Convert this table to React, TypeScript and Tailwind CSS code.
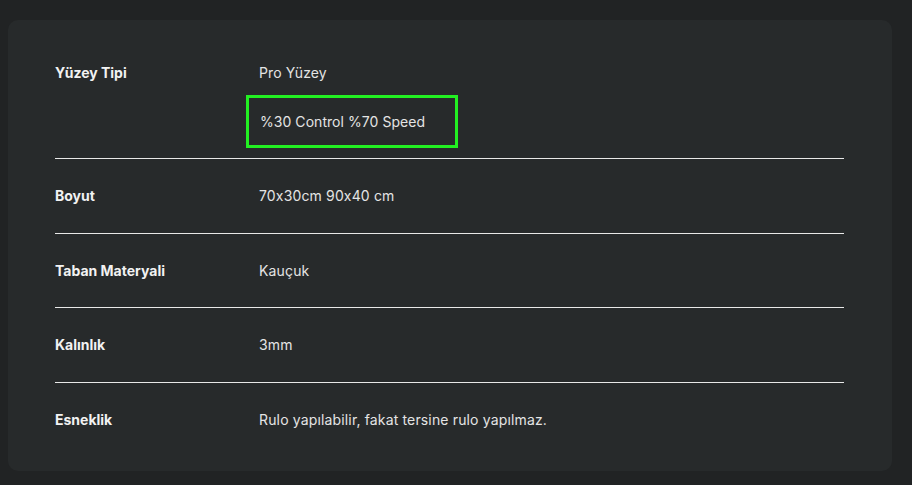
import React from "react";

const rows = [
  { label: "Boyut", value: "70x30cm 90x40 cm", pb: "pb-[27px]" },
  { label: "Taban Materyali", value: "Kauçuk", pb: "pb-[26px]" },
  { label: "Kalınlık", value: "3mm", pb: "pb-[27px]" },
  { label: "Esneklik", value: "Rulo yapılabilir, fakat tersine rulo yapılmaz.", pb: "pb-[27px]" },
];

export default function App() {
  return (
    <div
      className="w-[912px] h-[485px] bg-[#212324] pt-[20px] pl-[8px] [font-feature-settings:'calt'_0]"
      style={{ fontFamily: "Inter, Roboto, sans-serif" }}
    >
      <div className="w-[884px] h-[451px] bg-[#272a2b] rounded-[10px] pl-[47px] pt-[43px]">
        <div className="w-[789px]">
          <div className="flex pb-[10px] border-b border-[#e8e8e8]">
            <div className="w-[204px] text-[14px] leading-5 font-bold text-[#f2f2f2]">Yüzey Tipi</div>
            <div className="flex flex-col">
              <div className="text-[14px] leading-5 text-[#e4e4e4] tracking-[0.1px]">Pro Yüzey</div>
              <div className="mt-[12px] -ml-[13px] w-[212px] h-[53px] border-[3px] border-[#22f022] pl-[11px] flex items-center text-[14px] leading-5 text-[#e4e4e4] tracking-[0.05px]">
                %30 Control %70 Speed
              </div>
            </div>
          </div>
          {rows.map((r, i) => (
            <div
              key={r.label}
              className={
                (i < rows.length - 1
                  ? "flex pt-[27px] border-b border-[#e8e8e8] "
                  : "flex pt-[27px] ") + r.pb
              }
            >
              <div className="w-[204px] text-[14px] leading-5 font-bold text-[#f2f2f2]">{r.label}</div>
              <div className="text-[14px] leading-5 text-[#e4e4e4] tracking-[0.15px]">{r.value}</div>
            </div>
          ))}
        </div>
      </div>
    </div>
  );
}
